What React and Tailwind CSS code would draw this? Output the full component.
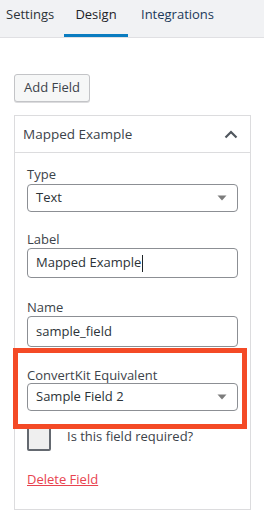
import React from "react";

const font = { fontFamily: '"Open Sans", "Noto Sans", sans-serif' };

function Arrow() {
  return (
    <svg width="10" height="6" viewBox="0 0 10 6" className="absolute right-[10px] top-1/2 -translate-y-1/2">
      <path d="M0.5 0.5 L9.5 0.5 L5 5.5 Z" fill="#7c7c7c" />
    </svg>
  );
}

export default function App() {
  return (
    <div className="w-[264px] h-[513px] bg-white overflow-hidden text-[13px] text-[#3c434a]" style={font}>
      <div className="h-[38px] bg-[#f1f2f4] border-b border-[#e0e0e3] flex text-[13px] text-[#2c3338]">
        <div className="w-[64px] pl-[6px] flex items-center pb-[8px]">Settings</div>
        <div className="w-[64px] flex items-center justify-center pb-[5px] border-b-[3px] border-[#0a7cc0] text-[#1d2327]">Design</div>
        <div className="pl-[13px] flex items-center pb-[8px] text-[#1c3a5a]">Integrations</div>
      </div>
      <div className="px-[14px]">
        <button className="mt-[36px] h-[28px] w-[76px] rounded-[3px] border border-[#c3c4c7] bg-[#f6f7f7] text-[13px] text-[#3c434a] shadow-[0_1px_0_#dcdcde]">
          Add Field
        </button>
        <div className="mt-[13px] border border-[#dcdcde] w-[237px]">
          <div className="h-[37px] border-b border-[#dcdcde] flex items-center justify-between pl-[8px] pr-[12px] text-[13.5px] text-[#3c434a]">
            <span>Mapped Example</span>
            <svg width="14" height="9" viewBox="0 0 14 9">
              <path d="M1.5 7.5 L7 2 L12.5 7.5" fill="none" stroke="#50575e" strokeWidth="2.2" />
            </svg>
          </div>
          <div className="pl-[12px] pr-[12px] pt-[12px] pb-[21px] text-[13px]">
            <div className="leading-[18px]">Type</div>
            <div className="relative h-[28px] mt-[1px] border border-[#8c8f94] rounded-[4px] flex items-center pl-[8px] text-[#2c3338]">
              Text
              <Arrow />
            </div>
            <div className="leading-[18px] mt-[18px]">Label</div>
            <div className="h-[30px] border border-[#8c8f94] rounded-[4px] flex items-center pl-[8px] text-[#2c3338]">
              Mapped Example<span className="inline-block w-[1px] h-[17px] bg-[#1d2327] ml-[1px]" />
            </div>
            <div className="leading-[18px] mt-[20px]">Name</div>
            <div className="h-[31px] border border-[#8c8f94] rounded-[4px] flex items-center pl-[8px] text-[#2c3338]">
              sample_field
            </div>
            <div className="relative mt-[19px]">
              <div className="leading-[18px]">ConvertKit Equivalent</div>
              <div className="relative h-[28px] mt-[-1px] border border-[#8c8f94] rounded-[4px] flex items-center pl-[8px] text-[#2c3338]">
                Sample Field 2
                <Arrow />
              </div>
              <div className="absolute left-[-14px] top-[-18px] right-[-9px] bottom-[-18px] border-[5px] border-[#f44a26] z-10 pointer-events-none" />
            </div>
            <div className="mt-[16px] flex items-center">
              <div className="w-[24px] h-[24px] border-2 border-[#646970] rounded-[2px] bg-[#efefef]" />
              <span className="ml-[16px] -mt-[4px]">Is this field required?</span>
            </div>
            <div className="mt-[19px] leading-[18px]">
              <span className="text-[#e8434f] underline">Delete Field</span>
            </div>
          </div>
        </div>
        <div className="mt-[6px] border border-[#dcdcde] w-[237px] h-[40px]" />
      </div>
    </div>
  );
}
